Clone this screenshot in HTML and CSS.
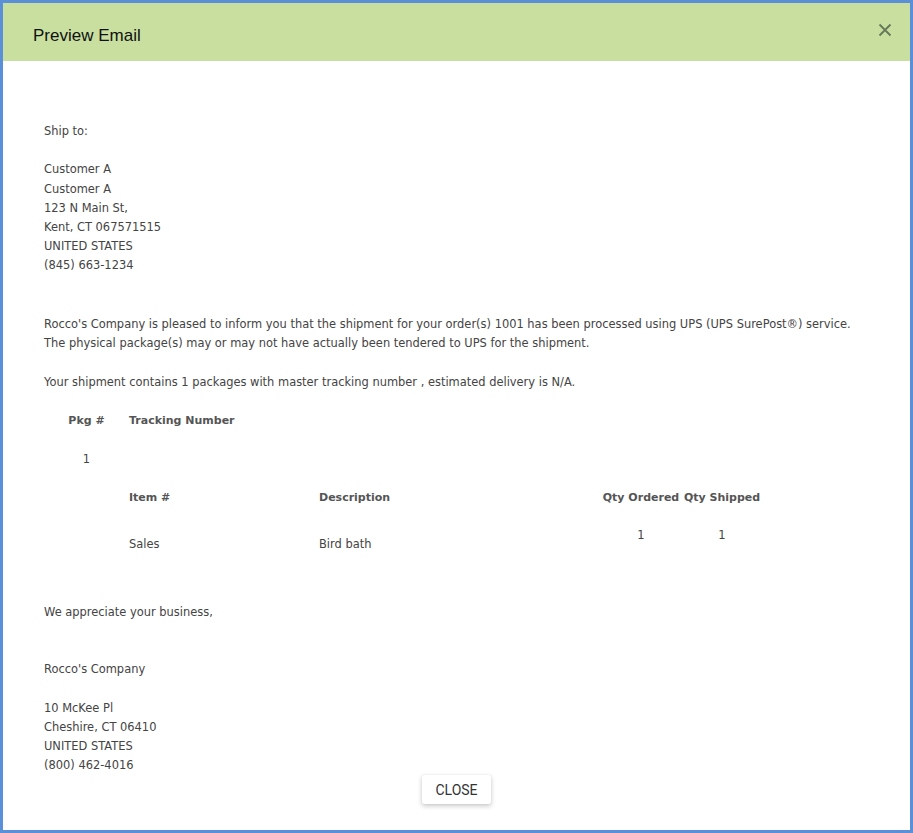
FILE: index.html
```html
<!DOCTYPE html>
<html>
<head>
<meta charset="utf-8">
<link rel="stylesheet" href="styles.css">
</head>
<body>
<div class="dialog">
  <header class="head">
    <h1 class="title">Preview Email</h1>
    <button class="x" aria-label="Close">
      <svg width="14" height="14" viewBox="0 0 14 14"><path d="M1.5 1.5 L12.5 12.5 M12.5 1.5 L1.5 12.5" stroke="#66775a" stroke-width="1.8" fill="none"/></svg>
    </button>
  </header>
  <div class="content">
    <p class="block">Ship to:<br><br>Customer A<br>Customer A<br>123 N Main St,<br>Kent, CT 067571515<br>UNITED STATES<br>(845) 663-1234</p>
    <p class="block b2">Rocco's Company is pleased to inform you that the shipment for your order(s) 1001 has been processed using UPS (UPS SurePost®) service.<br>The physical package(s) may or may not have actually been tendered to UPS for the shipment.<br><br>Your shipment contains 1 packages with master tracking number , estimated delivery is N/A.</p>
    <div class="pkgs">
      <div class="prow">
        <div class="pc-num th">Pkg #</div>
        <div class="pc-track th">Tracking Number</div>
      </div>
      <div class="prow">
        <div class="pc-num">1</div>
        <div class="pc-track"></div>
      </div>
      <div class="items">
        <div class="irow head-row">
          <div class="ic-item th">Item #</div>
          <div class="ic-desc th">Description</div>
          <div class="ic-qo th">Qty Ordered</div>
          <div class="ic-qs th">Qty Shipped</div>
        </div>
        <div class="irow data">
          <div class="ic-item low">Sales</div>
          <div class="ic-desc low">Bird bath</div>
          <div class="ic-qo high">1</div>
          <div class="ic-qs high">1</div>
        </div>
      </div>
    </div>
    <p class="block b3">We appreciate your business,<br><br><br>Rocco's Company<br><br>10 McKee Pl<br>Cheshire, CT 06410<br>UNITED STATES<br>(800) 462-4016</p>
  </div>
  <footer class="foot">
    <button class="close">CLOSE</button>
  </footer>
</div>
</body>
</html>
```
FILE: styles.css
```css
html, body { margin: 0; padding: 0; }
body { width: 913px; height: 833px; overflow: hidden; background: #fff; }
.dialog {
  box-sizing: border-box;
  width: 913px; height: 833px;
  border: 3px solid #5b8fd8;
  display: flex; flex-direction: column;
  background: #fff;
}
.head {
  height: 58px; flex: none;
  background: #c8dfa0;
  display: flex; align-items: center; justify-content: space-between;
  padding: 0 18px 0 30px;
}
.title {
  margin: 0;
  font-family: "Liberation Sans", Arial, sans-serif;
  font-size: 17px; font-weight: normal; color: #111;
  position: relative; top: 4px;
}
.x {
  border: 0; background: none; padding: 0; margin: 0;
  width: 14px; height: 14px; display: block; cursor: pointer;
  position: relative; top: -2px;
}
.x svg { display: block; }
.content {
  flex: 1; overflow: hidden;
  padding: 61px 0 0 41px;
  font-family: "DejaVu Sans", Tahoma, sans-serif;
  font-size: 11.45px; line-height: 19.2px; color: #444;
}
.block { margin: 0; }
.b2 { margin-top: 39.4px; }
.pkgs { margin-top: 9px; padding-left: 24px; }
.th { font-weight: bold; color: #555; font-size: 11px; }
.prow { display: flex; height: 39px; align-items: center; }
.pc-num { width: 37px; text-align: center; }
.pc-track { margin-left: 24px; }
.items { margin-left: 61px; }
.irow { display: flex; height: 39px; align-items: center; }
.irow.head-row { height: 37px; padding-bottom: 2px; }
.irow.data { align-items: flex-start; height: 45px; }
.ic-item { width: 190px; }
.ic-desc { width: 283px; }
.ic-qo { width: 78px; text-align: center; }
.ic-qs { width: 84px; text-align: center; }
.low { padding-top: 17px; }
.high { padding-top: 8px; }
.b3 { margin-top: 39.7px; }
.foot {
  height: 55px; flex: none;
  display: flex; justify-content: center; align-items: flex-start;
}
.close {
  width: 69px; height: 29px;
  border: 0; border-radius: 2px; background: #fff;
  box-shadow: 0 2px 5px rgba(0,0,0,0.22), 0 0 1px rgba(0,0,0,0.12);
  font-family: Roboto, "Liberation Sans", sans-serif;
  font-size: 14px; color: #333; padding: 0;
}
```
